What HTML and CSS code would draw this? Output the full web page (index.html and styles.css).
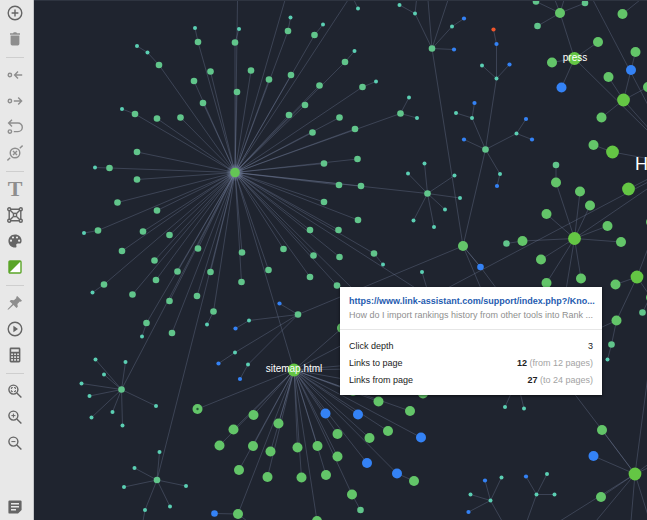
FILE: index.html
```html
<!DOCTYPE html>
<html lang="en">
<head>
    <meta charset="UTF-8">
    <meta name="viewport" content="width=device-width, initial-scale=1.0">
    <title>Site Structure</title>
    <link rel="stylesheet" href="styles.css">
</head>
<body>
    <nav class="toolbar" aria-label="Graph tools">
        <button class="tool dark" aria-label="Add page">
            <svg viewBox="0 0 16 16"><circle cx="8" cy="8" r="6.8"/><path d="M8 4.6v6.8M4.6 8h6.8"/></svg>
        </button>
        <button class="tool" aria-label="Delete">
            <svg viewBox="0 0 16 16"><path class="solid" d="M3 2.2h3l.8-1h2.4l.8 1h3v1.6H3zM3.6 4.6h8.8v8.2q0 1.6-1.6 1.6H5.2q-1.6 0-1.6-1.6z"/></svg>
        </button>
        <hr>
        <button class="tool" aria-label="Links to page">
            <svg viewBox="0 0 16 16"><circle cx="2.9" cy="8" r="1.7"/><path d="M15.2 8H8M11 4.6 7.6 8l3.4 3.4"/></svg>
        </button>
        <button class="tool" aria-label="Links from page">
            <svg viewBox="0 0 16 16"><circle cx="2.9" cy="8" r="1.7"/><path d="M6.8 8h7.4M11.2 4.6 14.6 8l-3.4 3.4"/></svg>
        </button>
        <button class="tool" aria-label="Redirect">
            <svg viewBox="0 0 16 16"><circle cx="2.9" cy="12.6" r="1.7"/><path d="M6.8 12.6H11a4.3 4.3 0 0 0 0-8.6H1.6M5 .8 1.6 4 5 7.4"/></svg>
        </button>
        <button class="tool" aria-label="Break link">
            <svg viewBox="0 0 16 16"><circle cx="8" cy="8" r="4.8"/><path d="m6 6 4 4M10 6l-4 4M.4 15.4l2.8-2.6M12.8 3.2 15.6.6"/></svg>
        </button>
        <hr>
        <button class="tool letter" aria-label="Text">T</button>
        <button class="tool dark" aria-label="Resize nodes">
            <svg viewBox="0 0 16 16"><path d="M2.2 2.2h11.6v11.6H2.2zM2.2 2.2l11.6 11.6M13.8 2.2 2.2 13.8"/><g class="knob"><circle cx="2.2" cy="2.2" r="1.5"/><circle cx="13.8" cy="2.2" r="1.5"/><circle cx="2.2" cy="13.8" r="1.5"/><circle cx="13.8" cy="13.8" r="1.5"/><circle cx="8" cy="8" r="1.7"/></g></svg>
        </button>
        <button class="tool dark" aria-label="Colors">
            <svg viewBox="0 0 16 16"><path class="solid" fill-rule="evenodd" d="M8 1.5C4.2 1.5 1.4 4.4 1.4 8S4.3 14.6 8 14.6c1.3 0 1.7-.8 1.4-1.7-.5-1.4.1-2.3 1.4-2.3h1.6c1.3 0 2.2-1 2.2-2.9C14.6 4 11.7 1.5 8 1.5zM4 6.6a1.1 1.1 0 1 1 0 2.2 1.1 1.1 0 0 1 0-2.2zm2-3.2a1.1 1.1 0 1 1 0 2.2 1.1 1.1 0 0 1 0-2.2zm4 0a1.1 1.1 0 1 1 0 2.2 1.1 1.1 0 0 1 0-2.2zm2.1 3.2a1.1 1.1 0 1 1 0 2.2 1.1 1.1 0 0 1 0-2.2z"/></svg>
        </button>
        <button class="tool green" aria-label="Contrast">
            <svg viewBox="0 0 16 16"><path class="paper" d="M2 2h12v12H2z"/><path class="solid" d="M2 2h12L2 14z"/><rect x="2" y="2" width="12" height="12" rx="1"/></svg>
        </button>
        <hr>
        <button class="tool" aria-label="Pin">
            <svg viewBox="0 0 16 16"><path class="solid" d="M10.2 1 15 5.8l-1.2 1-1-.2-2.4 2.5.4 2.6-1.3 1.3-3-3-5 4.6-.9.2.2-.9L5.4 9 2.600 6.2l1.3-1.3 3 .4L9.4 3l-.2-1z"/></svg>
        </button>
        <button class="tool dark" aria-label="Play">
            <svg viewBox="0 0 16 16"><circle cx="8" cy="8" r="6.8"/><path class="solid" d="M6.4 4.8 11 8l-4.6 3.2z"/></svg>
        </button>
        <button class="tool dark" aria-label="Recalculate">
            <svg viewBox="0 0 16 16"><path class="solid" fill-rule="evenodd" d="M4 .6h8q1.4 0 1.4 1.4v12q0 1.4-1.4 1.4H4q-1.4 0-1.4-1.4V2Q2.600.6 4 .6zM4.2 2.2v2.6h7.6V2.2zM4.2 6.4v1.7h1.7V6.4zM7.2 6.4v1.7h1.7V6.4zM10.2 6.4v1.7h1.7V6.4zM4.2 9.2v1.7h1.7V9.2zM7.2 9.2v1.7h1.7V9.2zM10.2 9.2v1.7h1.7V9.2zM4.2 12v1.7h1.7V12zM7.2 12v1.7h1.7V12zM10.2 12v1.7h1.7V12z"/></svg>
        </button>
        <hr>
        <button class="tool dark" aria-label="Zoom to fit">
            <svg viewBox="0 0 16 16"><circle cx="6.4" cy="6.6" r="4.5"/><path d="m9.8 10 4.6 4.4"/><path class="thin" d="M4.4 6V4.6h1.4M7 4.6h1.4V6M8.4 7.2v1.4H7M5.8 8.6H4.4V7.2"/></svg>
        </button>
        <button class="tool dark" aria-label="Zoom in">
            <svg viewBox="0 0 16 16"><circle cx="6.4" cy="6.6" r="4.5"/><path d="m9.8 10 4.6 4.4"/><path class="thin" d="M6.4 4.6v4M4.4 6.6h4"/></svg>
        </button>
        <button class="tool dark" aria-label="Zoom out">
            <svg viewBox="0 0 16 16"><circle cx="6.4" cy="6.6" r="4.5"/><path d="m9.8 10 4.6 4.4"/><path class="thin" d="M4.4 6.6h4"/></svg>
        </button>
        <button class="tool dark last" aria-label="Notes">
            <svg viewBox="0 0 16 16"><path class="solid" fill-rule="evenodd" d="M2.6 1.4h10.8q1.2 0 1.2 1.2V11L11 14.6H2.6q-1.2 0-1.2-1.2V2.6q0-1.2 1.2-1.2zM4 4v1.4h8V4zM4 7v1.4h8V7zM4 10v1.4h5V10z"/></svg>
        </button>
    </nav>

    <main class="canvas">
        <svg class="graph" viewBox="34 1 613 519" preserveAspectRatio="xMinYMin slice">
            <defs>
                <radialGradient id="halo">
                    <stop offset="40%" stop-color="#7886a6" stop-opacity="0.7"/>
                    <stop offset="100%" stop-color="#7886a6" stop-opacity="0"/>
                </radialGradient>
            </defs>
            <g id="links"></g>
            <circle cx="235" cy="172.5" r="9" fill="url(#halo)"/>
            <g id="nodes"></g>
            <circle class="dot" cx="197.5" cy="409" r="1.2"/>
            <text class="label" x="575" y="61">press</text>
            <text class="label" x="294" y="372">sitemap.html</text>
            <text class="label home" x="635" y="170">H</text>
        </svg>

        <section class="tooltip">
            <header>
                <a href="#">https://www.link-assistant.com/support/index.php?/Kno...</a>
                <p>How do I import rankings history from other tools into Rank ...</p>
            </header>
            <dl>
                <div><dt>Click depth</dt><dd>3</dd></div>
                <div><dt>Links to page</dt><dd><b>12</b> (from 12 pages)</dd></div>
                <div><dt>Links from page</dt><dd><b>27</b> (to 24 pages)</dd></div>
            </dl>
        </section>
    </main>

    <script src="graph.js"></script>
</body>
</html>
```
FILE: styles.css
```css
* {
    margin: 0;
    padding: 0;
    box-sizing: border-box;
}
body {
    display: flex;
    height: 100vh;
    overflow: hidden;
    font-family: "Liberation Sans", Arial, sans-serif;
    background-color: #1f242f;
}

/* toolbar */
.toolbar {
    display: flex;
    flex-direction: column;
    align-items: center;
    flex: none;
    width: 34px;
    padding: 0 3px 0 0;
    background-color: #e8e8e8;
    border-right: 1px solid #c4c6c9;
}
.toolbar hr {
    width: 18px;
    height: 1px;
    margin: 5px 0 4px;
    border: none;
    background-color: #cecece;
    flex: none;
}
.tool {
    display: flex;
    align-items: center;
    justify-content: center;
    flex: none;
    width: 30px;
    height: 26px;
    border: none;
    background: none;
    color: #8e8e8e;
    cursor: pointer;
}
.tool.dark {
    color: #656565;
}
.tool.green {
    color: #5ba529;
}
.tool.letter {
    font-family: "Liberation Serif", "Times New Roman", serif;
    font-size: 22px;
    font-weight: bold;
    line-height: 26px;
}
.tool.last {
    margin-top: auto;
}
.tool svg {
    width: 16px;
    height: 16px;
    fill: none;
    stroke: currentColor;
    stroke-width: 1.4;
}
.tool .solid {
    fill: currentColor;
    stroke: none;
}
.tool .paper {
    fill: #fff;
    stroke: none;
}
.tool .knob {
    fill: #e8e8e8;
}
.tool .thin {
    stroke-width: 1;
}

/* graph */
.canvas {
    position: relative;
    flex: 1;
    min-width: 0;
    border-top: 1px solid #2e3440;
}
.graph {
    display: block;
    width: 100%;
    height: 100%;
}
.graph line {
    stroke: #75819f;
    stroke-opacity: 0.34;
}
.tiny { fill: #5bcfb3; }
.small { fill: #61c58b; }
.medium { fill: #63c569; }
.hub { fill: #64c655; }
.large { fill: #64c644; }
.blue { fill: #3482f5; }
.orange { fill: #f0552b; }
.dot { fill: #235a35; }
.label {
    fill: #fff;
    font-size: 10px;
    text-anchor: middle;
}
.label.home {
    font-size: 18px;
    text-anchor: start;
}

/* page details */
.tooltip {
    position: absolute;
    left: 306px;
    top: 286px;
    width: 262px;
    background-color: #fff;
    box-shadow: 0 1px 3px rgba(0, 0, 0, 0.6);
    font-size: 9px;
    line-height: 14px;
    white-space: nowrap;
}
.tooltip header {
    padding: 7px 9px;
    border-bottom: 1px solid #e6e6e6;
}
.tooltip a {
    display: block;
    color: #1f5cb0;
    font-weight: bold;
    text-decoration: none;
}
.tooltip p {
    color: #8f8f8f;
}
.tooltip dl {
    padding: 8px 9px 6px;
}
.tooltip dl div {
    display: flex;
    justify-content: space-between;
    line-height: 17px;
    color: #222;
}
.tooltip dd {
    color: #a3a3a3;
}
.tooltip div:first-child dd,
.tooltip b {
    color: #222;
}
```
FILE: graph.js
```js
const SVG = 'http://www.w3.org/2000/svg';
const links = document.getElementById('links');
const nodes = document.getElementById('nodes');

// kind: [class, radius]
const kinds = {
    t: ['tiny', 2],
    s: ['small', 3.3],
    m: ['medium', 5],
    h: ['hub', 4.8],
    l: ['large', 6.4],
    b: ['blue', 2.1],
    c: ['blue', 3.3],
    B: ['blue', 5],
    o: ['orange', 2.1],
    // end of a link, nothing is drawn there
    x: null
};

// [kind, x, y, children]
const trees = [
    ['h', 235, 172.5, [
        ['s', 198, 42, [['t', 195, 28]]],
        ['s', 235, 42.5, [['t', 239, 29]]],
        ['s', 159, 65, [['t', 147.5, 52.5, [['t', 137, 46]]]]],
        ['s', 210.5, 71.5], ['s', 194, 81], ['s', 203, 103],
        ['s', 251, 70.5], ['s', 237, 92],
        ['s', 135, 114, [['t', 122, 109]]],
        ['s', 157, 118.5], ['s', 180.5, 117.5], ['s', 137, 152],
        ['s', 109.5, 168, [['t', 95, 167.5]]],
        ['s', 137, 179.5],
        ['s', 288, 31, [['t', 290.5, 17.5]]],
        ['s', 314.5, 35, [['t', 323, 24.5]]],
        ['s', 269, 79.5], ['s', 291, 75],
        ['s', 345, 62, [['t', 354.5, 51]]],
        ['s', 319.5, 85.5], ['s', 305, 105], ['s', 289, 115],
        ['s', 362.5, 87, [['t', 376, 81.5]]],
        ['s', 339.5, 117.5], ['s', 312.5, 132.5], ['s', 355, 129],
        ['s', 400.5, 113.5, [['t', 409, 97.5], ['t', 417, 118]]],
        ['s', 324, 163.5], ['s', 357.5, 159],
        ['s', 117.5, 202.5], ['s', 157, 210.5],
        ['s', 98, 230.5, [['t', 84, 233]]],
        ['s', 143, 231.5], ['s', 169.5, 235], ['s', 122, 251],
        ['s', 154.5, 260.5],
        ['s', 104, 284.5, [['t', 92.5, 292.5]]],
        ['s', 198, 248.5], ['s', 177.5, 271.5], ['s', 210.5, 272],
        ['s', 156, 280], ['s', 132.5, 294.5], ['s', 169.5, 301],
        ['s', 197, 296],
        ['s', 146.5, 323, [['t', 142, 336.5]]],
        ['s', 172, 333],
        ['s', 213.5, 311.5, [['t', 207, 324.5]]],
        ['s', 242, 252.5], ['s', 241.5, 282],
        ['s', 339, 185], ['s', 361, 186], ['s', 324, 202],
        ['s', 358, 220], ['s', 310, 230], ['s', 338.5, 230],
        ['s', 283.5, 249], ['s', 313.5, 255.5], ['s', 339.5, 257],
        ['s', 268.5, 270], ['s', 310, 277], ['s', 337, 285.5],
        ['s', 374, 253.5, [['t', 383, 264.5]]],
        ['x', 285, 0], ['x', 348, 0], ['x', 237.5, 0],
        ['x', 294, 370], ['x', 420, 291], ['x', 360, 296],
        ['s', 427.5, 193.5, [
            ['t', 408, 173.5], ['t', 424.5, 163.5], ['t', 454.5, 175.5],
            ['t', 460, 198], ['t', 445, 209.5], ['t', 434, 227], ['t', 413.5, 220.5]
        ]],
        ['s', 121.5, 389.5, [
            ['t', 95.5, 359.5], ['t', 125.5, 362], ['t', 104, 374.5],
            ['t', 81.5, 383.5], ['t', 89.5, 396], ['t', 91.5, 417.5],
            ['t', 112.5, 412], ['t', 122.5, 425.5], ['t', 156, 406]
        ]],
        ['s', 157, 480, [
            ['t', 159.5, 452], ['t', 134.5, 468], ['t', 124, 487],
            ['t', 186, 486], ['t', 170, 506.5], ['t', 145, 510, [['x', 143, 521]]]
        ]]
    ]],
    ['t', 358, 8.5, [['x', 354, 0]]],
    ['s', 432, 48.5, [
        ['t', 415, 13.5, [['t', 399.5, 5], ['x', 416.5, 0]]],
        ['t', 452, 26.5, [['b', 464, 18.5]]],
        ['b', 454, 49.5], ['x', 428, 0], ['x', 448, 0], ['x', 463, 246]
    ]],
    ['m', 463, 246, [
        ['s', 298, 314.5, [
            ['b', 279.5, 303.5],
            ['t', 249, 320.5, [['b', 235.5, 328.5]]],
            ['t', 235, 352.5, [['b', 218.5, 363.5]]],
            ['t', 248, 364.5, [['b', 240, 379]]]
        ]],
        ['c', 480.5, 267, [['x', 505, 300]]],
        ['x', 490, 310], ['x', 480.5, 267],
        ['s', 485.5, 149.5, [
            ['t', 472, 118, [['t', 456, 113], ['b', 474.5, 103]]],
            ['b', 464, 139.5],
            ['t', 516.5, 133.5, [['b', 526, 119], ['b', 532, 139.5]]],
            ['t', 500, 174, [['b', 497, 186]]],
            ['t', 496.5, 78.5, [
                ['t', 482, 65.5], ['b', 509.5, 64.5],
                ['b', 496.5, 44, [['o', 493.5, 29.5]]]
            ]]
        ]]
    ]],
    ['t', 422, 272, [['x', 428, 292]]],
    ['l', 574.5, 58.5, [
        ['m', 560, 13, [['s', 536, 1.5], ['s', 585, 3], ['s', 537.5, 26], ['x', 555, 0], ['x', 564, 0]]],
        ['m', 598, 42], ['m', 552, 62.5], ['B', 561.5, 87.5], ['x', 650, 133]
    ]],
    ['m', 622.5, 14, [['x', 640, 0]]],
    ['x', 593, 0, [['x', 650, 109]]],
    ['l', 623.5, 100, [
        ['B', 631, 70, [['m', 635.5, 52]]],
        ['m', 608.5, 77], ['m', 601.5, 117.5], ['m', 648, 87], ['x', 650, 130]
    ]],
    ['l', 612.5, 152, [['m', 593.5, 145], ['x', 650, 159]]],
    ['l', 574.5, 238.5, [
        ['m', 556, 182.5, [['s', 556, 165]]],
        ['m', 580, 191.5], ['m', 590, 205.5], ['m', 546.5, 214],
        ['m', 607.5, 226], ['m', 621, 242],
        ['m', 522.5, 241, [['s', 506.5, 243.5]]],
        ['m', 541, 259.5], ['m', 546.5, 283], ['m', 581, 278.5],
        ['x', 565, 296], ['x', 650, 187]
    ]],
    ['x', 440, 292, [['x', 650, 181]]],
    ['l', 628.5, 189, [['x', 650, 178]]],
    ['m', 651, 222],
    ['l', 637, 277, [
        ['m', 615.5, 284.5],
        ['m', 616.5, 320.5, [['s', 611.5, 344.5, [['t', 607.5, 359.5]]], ['x', 600, 328]]],
        ['x', 650, 243], ['m', 651, 297.5]
    ]],
    ['s', 642.5, 312.5, [['x', 650, 297]]],
    ['l', 294, 370, [
        ['m', 253.5, 415], ['m', 233.5, 429.5], ['m', 219.5, 445.5],
        ['m', 278.5, 423.5],
        ['m', 253, 446], ['m', 239, 470], ['m', 270.5, 451.5], ['m', 267.5, 477],
        ['m', 297.5, 447.5], ['m', 301.5, 477.5], ['m', 317.5, 446], ['m', 326, 475],
        ['B', 325.5, 413.5], ['B', 358, 414.5],
        ['m', 337.5, 434], ['m', 337.5, 456.5],
        ['m', 352, 494.5, [['s', 360.5, 510]]],
        ['m', 369.5, 438], ['m', 388, 431], ['m', 378.5, 401.5], ['m', 410, 411],
        ['B', 421, 437.5], ['B', 367, 463],
        ['B', 397, 473.5, [['m', 414, 481]]],
        ['m', 317, 521],
        ['m', 238, 514, [['c', 214.5, 513.5], ['x', 247, 521]]],
        ['m', 197.5, 409],
        ['m', 342, 328], ['x', 350, 341], ['x', 350, 365], ['x', 350, 369],
        ['m', 353, 391], ['m', 423, 393.5]
    ]],
    ['x', 517, 380, [['t', 505, 407], ['t', 524, 408.5]]],
    ['l', 635, 474, [
        ['m', 602, 430, [['x', 570, 388]]],
        ['B', 593.5, 456], ['m', 601, 497], ['x', 602, 430], ['x', 560, 521],
        ['x', 596, 521], ['x', 631, 521], ['x', 650, 522],
        ['x', 650, 360], ['x', 650, 463], ['x', 650, 467]
    ]],
    ['t', 490.5, 500.5, [
        ['b', 485, 480.5], ['t', 501.5, 477.5], ['t', 470.5, 494.5],
        ['b', 468.5, 512], ['x', 502, 521]
    ]],
    ['t', 536.5, 494.5, [
        ['b', 526, 476.5], ['t', 547, 474], ['t', 554.5, 494.5], ['x', 527, 521]
    ]]
];

function add(parent, tag, attrs) {
    const el = document.createElementNS(SVG, tag);
    for (const key in attrs) {
        el.setAttribute(key, attrs[key]);
    }
    parent.appendChild(el);
}

function draw([kind, x, y, children = []]) {
    children.forEach(child => {
        add(links, 'line', { x1: x, y1: y, x2: child[1], y2: child[2] });
        draw(child);
    });
    if (kinds[kind]) {
        add(nodes, 'circle', { class: kinds[kind][0], cx: x, cy: y, r: kinds[kind][1] });
    }
}

trees.forEach(draw);
```
